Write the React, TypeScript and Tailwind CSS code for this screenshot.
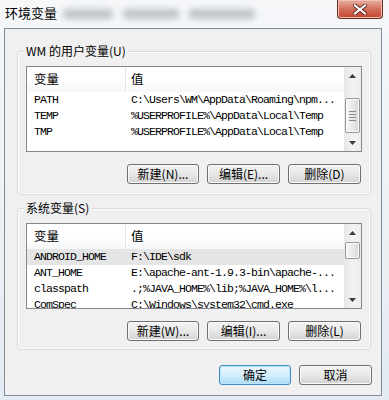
import React from "react";

type Row = { name: string; value: string };

const USER_ROWS: Row[] = [
  { name: "PATH", value: "C:\\Users\\WM\\AppData\\Roaming\\npm..." },
  { name: "TEMP", value: "%USERPROFILE%\\AppData\\Local\\Temp" },
  { name: "TMP", value: "%USERPROFILE%\\AppData\\Local\\Temp" },
];

const SYSTEM_ROWS: Row[] = [
  { name: "ANDROID_HOME", value: "F:\\IDE\\sdk" },
  { name: "ANT_HOME", value: "E:\\apache-ant-1.9.3-bin\\apache-..." },
  { name: "classpath", value: ".;%JAVA_HOME%\\lib;%JAVA_HOME%\\l..." },
  { name: "ComSpec", value: "C:\\Windows\\system32\\cmd.exe" },
];

function Arrow({ down }: { down?: boolean }) {
  return (
    <div className="h-[17px] flex items-center justify-center">
      <svg width="7" height="4" viewBox="0 0 7 4">
        {down ? <path d="M0 0h7L3.5 4z" fill="#3b3b3b" /> : <path d="M0 4h7L3.5 0z" fill="#3b3b3b" />}
      </svg>
    </div>
  );
}

function ScrollBar({ thumbTop, thumbHeight }: { thumbTop: number; thumbHeight: number }) {
  return (
    <div className="w-[17px] flex flex-col bg-gradient-to-r from-[#e6e6e6] via-[#f2f2f2] to-[#eeeeee]">
      <Arrow />
      <div className="flex-1 flex flex-col">
        {/* thumb offset is data */}
        <div
          className="mx-[1px] rounded-[2px] border border-[#979797] bg-gradient-to-r from-[#f6f6f6] via-[#e9e9e9] to-[#d6d6d6] flex flex-col items-center justify-center gap-[2px] shadow-[inset_0_0_0_1px_#fbfbfb]"
          style={{ marginTop: thumbTop, height: thumbHeight }}
        >
          {thumbHeight > 20 && (
            <>
              <div className="w-[7px] h-px bg-[#8c8c8c]" />
              <div className="w-[7px] h-px bg-[#8c8c8c]" />
              <div className="w-[7px] h-px bg-[#8c8c8c]" />
              <div className="w-[7px] h-px bg-[#8c8c8c]" />
            </>
          )}
        </div>
      </div>
      <Arrow down />
    </div>
  );
}

function VarList({
  rows,
  selected,
  thumbTop,
  thumbHeight,
}: {
  rows: Row[];
  selected?: number;
  thumbTop: number;
  thumbHeight: number;
}) {
  return (
    <div className="w-[336px] h-[86px] border border-[#828790] bg-white flex">
      <div className="flex-1 flex flex-col overflow-hidden">
        {/* header */}
        <div className="h-[25px] shrink-0 flex bg-gradient-to-b from-white via-white to-[#f6f7f9] text-[12.5px]">
          <div className="w-[99px] pl-[7px] flex items-center border-r border-[#e2e5ea]">变量</div>
          <div className="flex-1 pl-[4px] flex items-center border-l border-white">值</div>
        </div>
        {rows.map((r, i) => (
          <div
            key={r.name}
            className={`h-[16px] shrink-0 flex items-center whitespace-nowrap font-['Liberation_Mono',monospace] text-[11.5px] tracking-[-0.9px] text-black ${
              i === selected ? "bg-[#e5e5e5]" : ""
            }`}
          >
            <div className="w-[100px] pl-[7px]">{r.name}</div>
            <div className="pl-[4px]">{r.value}</div>
          </div>
        ))}
      </div>
      <ScrollBar thumbTop={thumbTop} thumbHeight={thumbHeight} />
    </div>
  );
}

function Btn({ label, w, primary }: { label: string; w: string; primary?: boolean }) {
  return (
    <button
      className={`${w} h-[20px] rounded-[3px] border text-[12px] leading-none text-black flex items-center justify-center ${
        primary
          ? "border-[#3c8ec4] bg-gradient-to-b from-[#eaf6fd] via-[#d4eefc] to-[#a9daf5] shadow-[inset_0_0_0_1px_#bfe4f8]"
          : "border-[#707070] bg-gradient-to-b from-[#f3f3f3] via-[#e8e8e8] to-[#d2d2d2] shadow-[inset_0_0_0_1px_#fafafa]"
      }`}
    >
      {label}
    </button>
  );
}

function Group({
  title,
  rows,
  selected,
  thumbTop,
  thumbHeight,
  buttons,
  className,
}: {
  title: string;
  rows: Row[];
  selected?: number;
  thumbTop: number;
  thumbHeight: number;
  buttons: string[];
  className: string;
}) {
  return (
    <div className={`relative w-[354px] border border-[#d5dfe5] rounded-[3px] shadow-[inset_0_0_0_1px_#fbfcfd] ${className}`}>
      <span className="absolute -top-[9px] left-[6px] px-[2px] bg-[#f0f0f0] text-[12px] leading-[16px]">{title}</span>
      <div className="ml-[8px] mt-[14px]">
        <VarList rows={rows} selected={selected} thumbTop={thumbTop} thumbHeight={thumbHeight} />
      </div>
      <div className="mt-[12px] mr-[9px] flex justify-end gap-[8px]">
        <Btn label={buttons[0]} w="w-[72px]" />
        <Btn label={buttons[1]} w="w-[73px]" />
        <Btn label={buttons[2]} w="w-[73px]" />
      </div>
    </div>
  );
}

export default function App() {
  return (
    <div className="w-[389px] h-[400px] overflow-hidden bg-gradient-to-b from-[#f5f7f9] via-[#eef2f6] to-[#e3eaf1] font-['Noto_Sans_CJK_SC',sans-serif] text-black">
      {/* title bar */}
      <div className="h-[28px] flex items-start">
        <div className="pl-[5px] pt-[4px] text-[13px] leading-[17px] text-black [text-shadow:0_0_6px_#ffffff]">环境变量</div>
        <div className="ml-[6px] mt-[9px] flex gap-[10px] opacity-40 blur-[3px]">
          <div className="w-[50px] h-[10px] bg-[#6f7680] rounded" />
          <div className="w-[56px] h-[10px] bg-[#6f7680] rounded" />
          <div className="w-[66px] h-[10px] bg-[#6f7680] rounded" />
        </div>
        <div className="ml-auto mr-[6px] w-[46px] h-[19px] rounded-b-[4px] border border-t-0 border-[#6e2a22] bg-gradient-to-b from-[#eab0a3] via-[#d36f5d] to-[#c3412c] shadow-[inset_0_0_0_1px_#f1c1b6] flex items-center justify-center">
          <svg width="14" height="11" viewBox="0 0 14 11">
            <path d="M2 1.5L12 9.5M12 1.5L2 9.5" stroke="#5a1f18" strokeWidth="4" strokeLinecap="square" />
            <path d="M2 1.5L12 9.5M12 1.5L2 9.5" stroke="#ffffff" strokeWidth="2.2" strokeLinecap="square" />
          </svg>
        </div>
      </div>

      {/* client area */}
      <div className="ml-[4px] w-[378px] h-[368px] border border-[#7f8b98] bg-[#f0f0f0] flex flex-col items-start">
        <Group
          title="WM 的用户变量(U)"
          rows={USER_ROWS}
          thumbTop={14}
          thumbHeight={35}
          buttons={["新建(N)...", "编辑(E)...", "删除(D)"]}
          className="ml-[12px] mt-[22px] h-[144px]"
        />
        <Group
          title="系统变量(S)"
          rows={SYSTEM_ROWS}
          selected={0}
          thumbTop={1}
          thumbHeight={17}
          buttons={["新建(W)...", "编辑(I)...", "删除(L)"]}
          className="ml-[12px] mt-[13px] h-[142px]"
        />
        <div className="self-end mr-[9px] mt-[15px] flex gap-[8px]">
          <Btn label="确定" w="w-[72px]" primary />
          <Btn label="取消" w="w-[73px]" />
        </div>
      </div>
    </div>
  );
}
